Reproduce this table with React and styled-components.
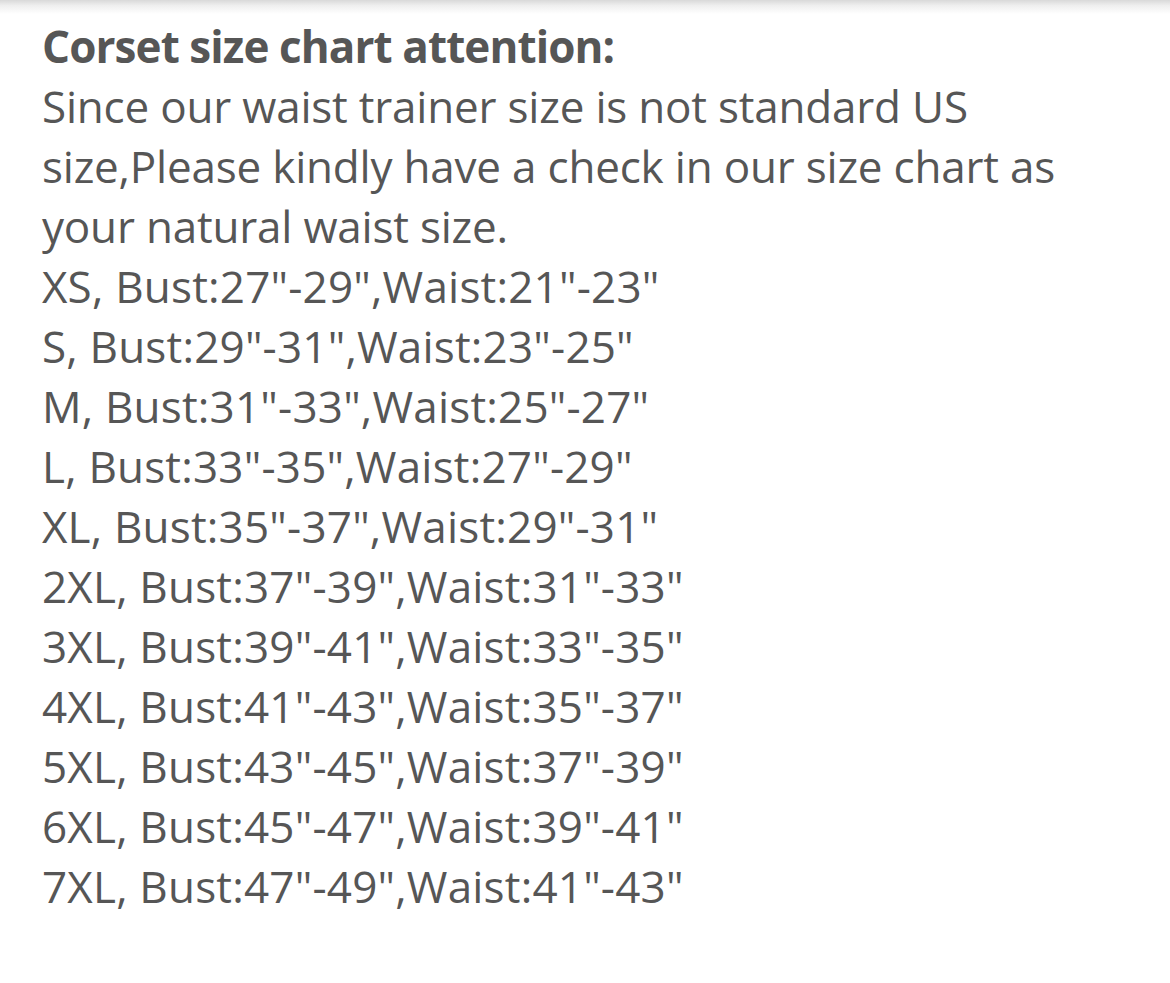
import React from 'react'
import styled, { createGlobalStyle } from 'styled-components'

const GlobalStyle = createGlobalStyle`
  html, body {
    margin: 0;
    padding: 0;
    background: #ffffff;
  }
`;

const sizes = [
  ['XS', '27"-29"', '21"-23"'],
  ['S', '29"-31"', '23"-25"'],
  ['M', '31"-33"', '25"-27"'],
  ['L', '33"-35"', '27"-29"'],
  ['XL', '35"-37"', '29"-31"'],
  ['2XL', '37"-39"', '31"-33"'],
  ['3XL', '39"-41"', '33"-35"'],
  ['4XL', '41"-43"', '35"-37"'],
  ['5XL', '43"-45"', '37"-39"'],
  ['6XL', '45"-47"', '39"-41"'],
  ['7XL', '47"-49"', '41"-43"'],
];

const intro = [
  'Since our waist trainer size is not standard US',
  'size,Please kindly have a check in our size chart as',
  'your natural waist size.',
];

export default function App() {
  return (
    <Page>
      <GlobalStyle />
      <Shade />
      <Content>
        <Line bold>Corset size chart attention:</Line>
        {intro.map((text) => (
          <Line key={text} tight>{text}</Line>
        ))}
        {sizes.map(([size, bust, waist]) => (
          <Line key={size}>{`${size}, Bust:${bust},Waist:${waist}`}</Line>
        ))}
      </Content>
    </Page>
  )
}

const Page = styled.div`
  width: 1170px;
  height: 983px;
  background: #ffffff;
  overflow: hidden;
`;

const Shade = styled.div`
  height: 14px;
  background: linear-gradient(to bottom, #d9d9d9 0%, #efefef 40%, #ffffff 100%);
`;

const Content = styled.div`
  padding: 2px 0 0 42px;
  display: flex;
  flex-direction: column;
`;

const Line = styled.div`
  font-family: "Open Sans", "Noto Sans", sans-serif;
  font-size: 44px;
  line-height: 60px;
  height: 60px;
  white-space: nowrap;
  color: #565656;
  font-weight: ${({ bold }) => (bold ? 700 : 400)};
  letter-spacing: ${({ bold, tight }) => (bold ? '-0.9px' : tight ? '-0.2px' : '0.2px')};
`;
